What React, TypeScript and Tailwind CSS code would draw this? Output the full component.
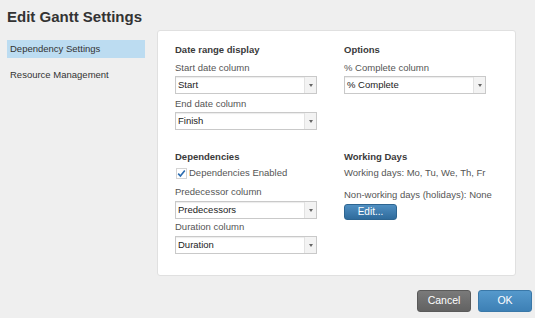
import React from "react";

function Select({ value, width = 142 }: { value: string; width?: number }) {
  return (
    <div
      className="flex h-[18px] border border-[#c9c9c9] bg-white shadow-[inset_0_1px_1px_rgba(0,0,0,0.08)]"
      style={{ width }}
    >
      <div className="flex-1 pl-[2px] text-[9.5px] leading-[16px] text-[#222]">{value}</div>
      <div className="flex w-[12px] items-center justify-center border-l border-[#e2e2e2] bg-[#f3f3f3]">
        <div className="h-0 w-0 border-x-[2.5px] border-t-[3px] border-x-transparent border-t-[#666]" />
      </div>
    </div>
  );
}

function Label({ children, className = "" }: { children: React.ReactNode; className?: string }) {
  return <div className={`h-[14px] whitespace-nowrap text-[9.5px] leading-[14px] text-[#555] ${className}`}>{children}</div>;
}

function Heading({ children }: { children: React.ReactNode }) {
  return <div className="h-[14px] text-[9.5px] font-bold leading-[14px] text-[#3a3a3a]">{children}</div>;
}

export default function App() {
  return (
    <div
      className="relative h-[318px] w-[535px] overflow-hidden bg-[#efefef]"
      style={{ fontFamily: '"Liberation Sans", Arial, sans-serif' }}
    >
      <div className="px-[7px] pt-[7px] text-[15px] font-bold leading-[20px] text-[#333]">Edit Gantt Settings</div>
      <div className="mt-[3px] flex">
        <div className="ml-[7px] w-[138px] pt-[10px]">
          <div className="h-[18px] bg-[#bcdcf1] pl-[3px] text-[9.5px] leading-[18px] text-[#333]">Dependency Settings</div>
          <div className="mt-[8px] h-[18px] pl-[3px] text-[9.5px] leading-[18px] text-[#333]">Resource Management</div>
        </div>
        <div className="ml-[12px] h-[246px] w-[359px] rounded-[3px] border border-[#e0e0e0] bg-white pl-[17px] pt-[12px]">
          <div className="grid h-[107px] grid-cols-[169px_1fr]">
            <div>
              <Heading>Date range display</Heading>
              <Label className="mt-[4px]">Start date column</Label>
              <div className="mt-[1px]"><Select value="Start" /></div>
              <Label className="mt-[3px]">End date column</Label>
              <div className="mt-[1px]"><Select value="Finish" /></div>
            </div>
            <div>
              <Heading>Options</Heading>
              <Label className="mt-[4px]">% Complete column</Label>
              <div className="mt-[1px]"><Select value="% Complete" /></div>
            </div>
          </div>
          <div className="grid grid-cols-[169px_1fr]">
            <div>
              <Heading>Dependencies</Heading>
              <div className="mt-[2px] flex h-[14px] items-center text-[9.5px] leading-[14px] text-[#555]">
                <svg width="11" height="11" viewBox="0 0 11 11" className="ml-[1px] mr-[1px]">
                  <rect x="0.5" y="0.5" width="10" height="10" fill="#fff" stroke="#d4d4d4" />
                  <path d="M2.2 5.6 L4.4 8 L8.8 2.4" fill="none" stroke="#2b6cb0" strokeWidth="1.6" />
                </svg>
                <span className="ml-[1px]">Dependencies Enabled</span>
              </div>
              <Label className="mt-[5px]">Predecessor column</Label>
              <div className="mt-[2px]"><Select value="Predecessors" /></div>
              <Label className="mt-[1px]">Duration column</Label>
              <div className="mt-[2px]"><Select value="Duration" /></div>
            </div>
            <div>
              <Heading>Working Days</Heading>
              <Label className="mt-[2px]">Working days: Mo, Tu, We, Th, Fr</Label>
              <Label className="mt-[8px]">Non-working days (holidays): None</Label>
              <button className="mt-[2px] block h-[16px] w-[53px] rounded-[3px] border border-[#2d6591] bg-gradient-to-b from-[#4f8fc2] to-[#2f6b9c] text-[10px] leading-[14px] text-white">
                Edit...
              </button>
            </div>
          </div>
        </div>
      </div>
      <div className="absolute left-[417px] top-[290px] flex gap-[7px]">
        <button className="h-[22px] w-[54px] rounded-[3px] border border-[#5a5a5a] bg-gradient-to-b from-[#7a7a7a] to-[#626262] text-[10.5px] text-white">
          Cancel
        </button>
        <button className="h-[22px] w-[54px] rounded-[3px] border border-[#3a78a8] bg-gradient-to-b from-[#5599cc] to-[#3d80b5] text-[10.5px] text-white">
          OK
        </button>
      </div>
    </div>
  );
}
